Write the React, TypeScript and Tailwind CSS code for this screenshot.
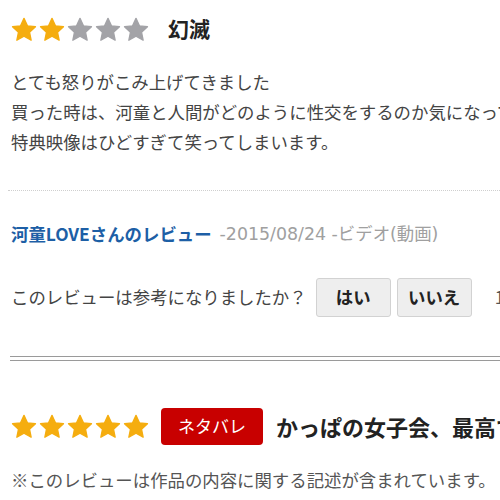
import React from "react";

const Star = ({ color }: { color: string }) => (
  <svg width="26" height="25" viewBox="0 0 24 23" className="shrink-0">
    <path
      d="M12 1.2l3.2 6.9 7.4.8-5.5 5.1 1.5 7.4L12 17.6l-6.6 3.8 1.5-7.4L1.4 8.9l7.4-.8z"
      fill={color}
      stroke={color}
      strokeWidth="1.2"
      strokeLinejoin="round"
    />
  </svg>
);

const Stars = ({ n }: { n: number }) => (
  <div className="flex items-center gap-[2px] shrink-0">
    {[0, 1, 2, 3, 4].map((i) => (
      <Star key={i} color={i < n ? "#f5ad0f" : "#a3a3a7"} />
    ))}
  </div>
);

export default function App() {
  return (
    <div
      className="w-[500px] h-[500px] overflow-hidden bg-white text-[#333] text-[17.4px]"
      style={{ fontFamily: '"Noto Sans CJK JP", sans-serif' }}
    >
      <div className="pl-[11px] whitespace-nowrap">
        <div className="flex items-center h-[30px] mt-[14px]">
          <Stars n={2} />
          <span className="ml-[19px] shrink-0 text-[21px] font-bold text-[#222]">幻滅</span>
        </div>
        <div className="mt-[23px] leading-[30px] text-[#444]">
          <div>とても怒りがこみ上げてきました</div>
          <div>買った時は、河童と人間がどのように性交をするのか気になって購入しました</div>
          <div>特典映像はひどすぎて笑ってしまいます。</div>
        </div>
      </div>
      <div className="ml-[8px] mt-[33px] border-t border-dotted border-[#cfcfcf]" />
      <div className="pl-[11px] whitespace-nowrap">
        <div className="mt-[30px] h-[26px] flex items-center">
          <span className="shrink-0 font-bold text-[#1d5fa6]">河童LOVEさんのレビュー</span>
          <span
            className="shrink-0 ml-[8px] text-[#a0a0a0]"
            style={{ fontFamily: '"DejaVu Sans", "Noto Sans CJK JP", sans-serif' }}
          >
            -2015/08/24 -ビデオ(動画)
          </span>
        </div>
        <div className="mt-[30px] h-[40px] flex items-center text-[#444]">
          <span className="shrink-0">このレビューは参考になりましたか？</span>
          <button className="shrink-0 ml-[9px] w-[75px] h-[39px] bg-[#eeeeee] border border-[#d2d2d2] rounded-[3px] font-bold text-[#222]">
            はい
          </button>
          <button className="shrink-0 ml-[6px] w-[75px] h-[39px] bg-[#eeeeee] border border-[#d2d2d2] rounded-[3px] font-bold text-[#222]">
            いいえ
          </button>
          <span className="shrink-0 ml-[23px] text-[#555]">1人</span>
        </div>
      </div>
      <div className="ml-[10px] mt-[39px] h-[5px] border-t border-b border-[#9a9a9a]" />
      <div className="pl-[11px] whitespace-nowrap">
        <div className="mt-[46px] h-[38px] flex items-center">
          <Stars n={5} />
          <span className="shrink-0 ml-[12px] h-[37px] w-[102px] flex items-center justify-center bg-[#c80000] rounded-[4px] text-white text-[17px]">
            ネタバレ
          </span>
          <span className="shrink-0 ml-[13px] text-[22px] font-bold text-[#222]">かっぱの女子会、最高でした</span>
        </div>
        <div className="mt-[22px] text-[#555]">※このレビューは作品の内容に関する記述が含まれています。</div>
      </div>
    </div>
  );
}
